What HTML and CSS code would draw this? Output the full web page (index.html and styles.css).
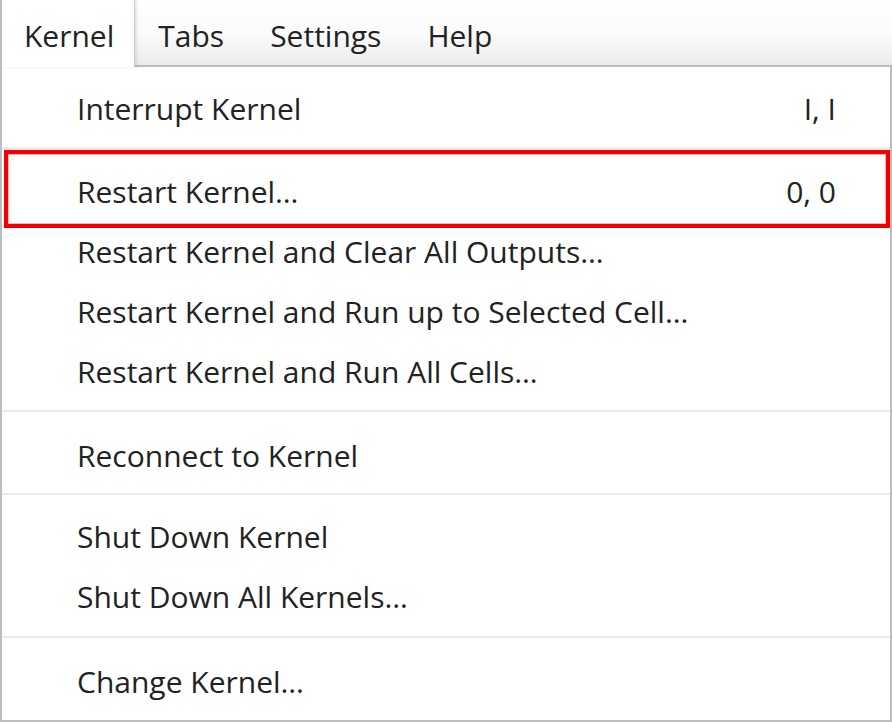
FILE: index.html
```html
<!DOCTYPE html>
<html>
<head>
<meta charset="utf-8">
<link rel="stylesheet" href="styles.css">
</head>
<body>
<div class="menubar">
  <div class="tab active">Kernel</div>
  <div class="tab">Tabs</div>
  <div class="tab">Settings</div>
  <div class="tab">Help</div>
  <div class="bar-fill"></div>
</div>
<div class="menu">
  <div class="item"><span class="label">Interrupt Kernel</span><span class="key">I, I</span></div>
  <div class="hover-band"></div>
  <div class="item highlighted"><span class="label">Restart Kernel…</span><span class="key">0, 0</span><div class="annotation"></div></div>
  <div class="item"><span class="label">Restart Kernel and Clear All Outputs…</span></div>
  <div class="item"><span class="label">Restart Kernel and Run up to Selected Cell…</span></div>
  <div class="item"><span class="label">Restart Kernel and Run All Cells…</span></div>
  <div class="sep"></div>
  <div class="item"><span class="label">Reconnect to Kernel</span></div>
  <div class="sep sep-tight"></div>
  <div class="item item-short"><span class="label">Shut Down Kernel</span></div>
  <div class="item"><span class="label">Shut Down All Kernels…</span></div>
  <div class="sep sep-wide"></div>
  <div class="item"><span class="label">Change Kernel…</span></div>
</div>
</body>
</html>
```
FILE: styles.css
```css
html, body {
  margin: 0;
  padding: 0;
  background: #ffffff;
}
body {
  width: 892px;
  height: 722px;
  overflow: hidden;
  font-family: "Open Sans", "Noto Sans", sans-serif;
  font-size: 30px;
  color: #222222;
}
.menubar {
  display: flex;
  height: 65px;
  border-bottom: 2px solid #bdbdbd;
  background: linear-gradient(to bottom, #ffffff 0%, #fbfbfb 50%, #ececec 100%);
}
.tab {
  padding: 7px 23px 0 23px;
  line-height: 58px;
  white-space: nowrap;
}
.tab.active {
  background: #ffffff;
  border-left: 2px solid #bdbdbd;
  border-right: 1px solid #c8c8c8;
  padding-left: 22px;
  padding-right: 20px;
  margin-bottom: -2px;
  position: relative;
  z-index: 1;
  box-shadow: 2px 0 3px rgba(0,0,0,0.10);
}
.bar-fill {
  flex: 1;
}
.menu {
  box-sizing: border-box;
  height: 655px;
  border: 2px solid #bdbdbd;
  border-top: none;
  padding-top: 11px;
  display: flex;
  flex-direction: column;
}
.item {
  height: 60px;
  flex: none;
  display: flex;
  align-items: center;
  justify-content: space-between;
  padding: 0 54px 0 75px;
  white-space: nowrap;
  position: relative;
}
.item-short {
  height: 59px;
}
.hover-band {
  flex: none;
  height: 3px;
  background: #ececec;
  margin: 9px 0 11px 0;
}
.sep {
  flex: none;
  height: 2px;
  background: #ececec;
  margin: 9px 0 13px 0;
}
.sep-tight {
  margin: 8px 0 12px 0;
}
.sep-wide {
  margin: 10px 0 13px 0;
}
.annotation {
  position: absolute;
  top: -11px;
  bottom: -7px;
  left: 2px;
  right: 0;
  border: 4px solid #f20000;
  box-shadow: inset 0 0 0 1px #f7b5b5;
}
```
